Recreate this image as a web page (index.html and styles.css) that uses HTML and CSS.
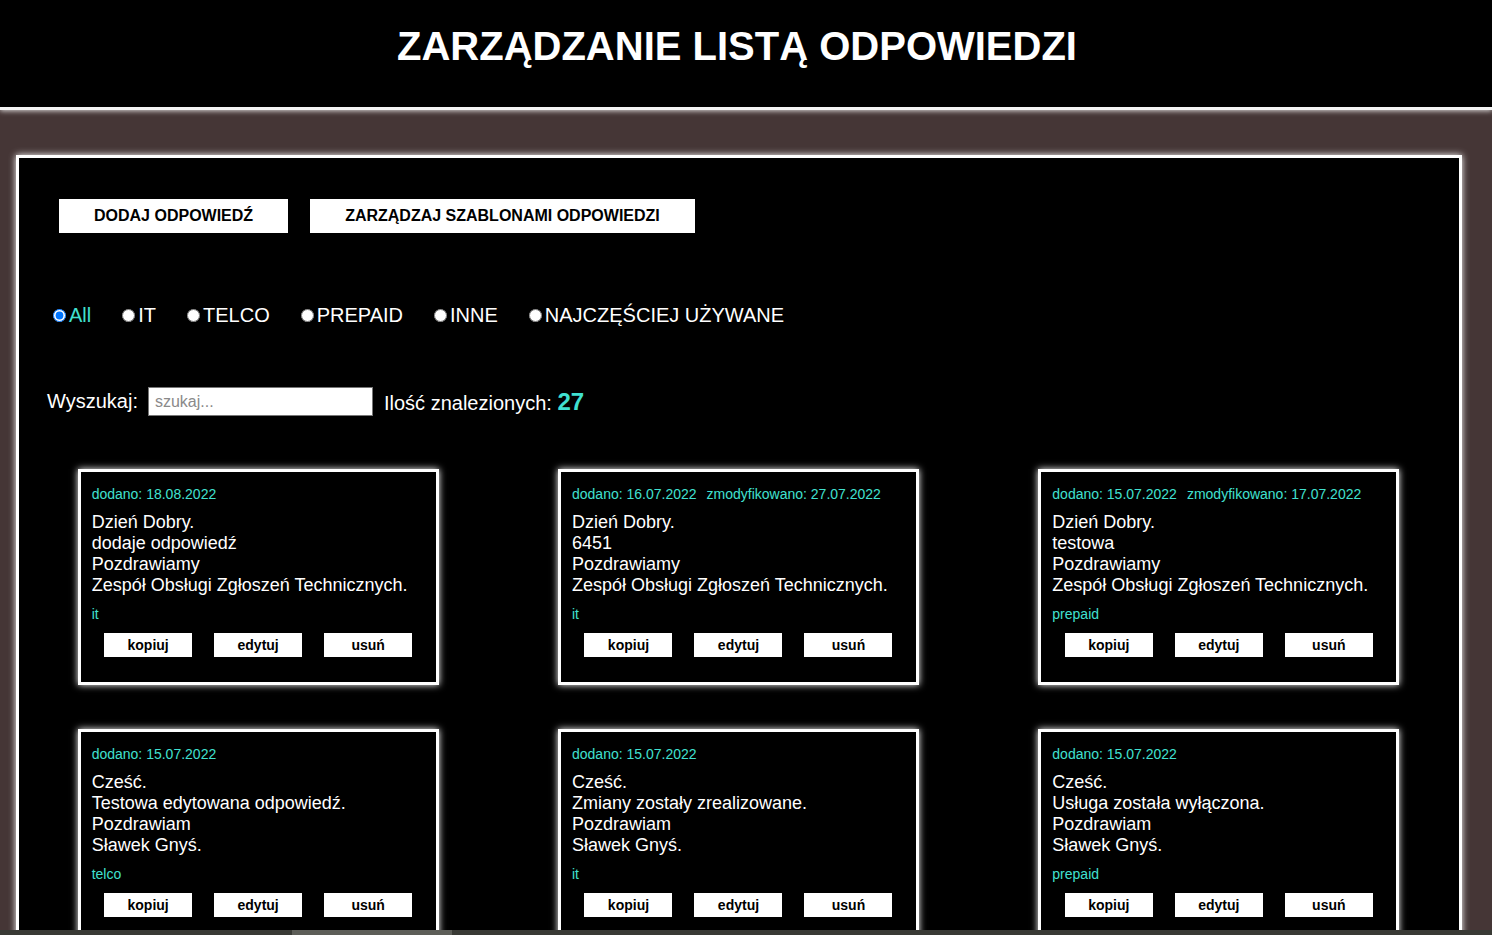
FILE: index.html
```html
<!DOCTYPE html>
<html lang="pl">
<head>
<meta charset="utf-8">
<title>Zarządzanie listą odpowiedzi</title>
<link rel="stylesheet" href="styles.css">
</head>
<body>
<header class="top">
  <h1 class="title">ZARZĄDZANIE LISTĄ ODPOWIEDZI</h1>
</header>
<main class="panel">
  <div class="actions">
    <button class="big-btn">DODAJ ODPOWIEDŹ</button>
    <button class="big-btn">ZARZĄDZAJ SZABLONAMI ODPOWIEDZI</button>
  </div>
  <div class="filters">
    <label class="filter active"><input type="radio" name="cat" checked>All</label>
    <label class="filter"><input type="radio" name="cat">IT</label>
    <label class="filter"><input type="radio" name="cat">TELCO</label>
    <label class="filter"><input type="radio" name="cat">PREPAID</label>
    <label class="filter"><input type="radio" name="cat">INNE</label>
    <label class="filter"><input type="radio" name="cat">NAJCZĘŚCIEJ UŻYWANE</label>
  </div>
  <div class="search">
    <span class="search-label">Wyszukaj:</span>
    <input class="search-input" type="text" placeholder="szukaj...">
    <span class="count-label">Ilość znalezionych: <b class="count">27</b></span>
  </div>
  <div class="cards">
    <div class="card">
      <div class="dates"><span class="date">dodano: 18.08.2022</span></div>
      <div class="body">Dzień Dobry.<br>dodaje odpowiedź<br>Pozdrawiamy<br>Zespół Obsługi Zgłoszeń Technicznych.</div>
      <div class="tag">it</div>
      <div class="card-btns"><button class="small-btn">kopiuj</button><button class="small-btn">edytuj</button><button class="small-btn">usuń</button></div>
    </div>
    <div class="card">
      <div class="dates"><span class="date">dodano: 16.07.2022</span><span class="date">zmodyfikowano: 27.07.2022</span></div>
      <div class="body">Dzień Dobry.<br>6451<br>Pozdrawiamy<br>Zespół Obsługi Zgłoszeń Technicznych.</div>
      <div class="tag">it</div>
      <div class="card-btns"><button class="small-btn">kopiuj</button><button class="small-btn">edytuj</button><button class="small-btn">usuń</button></div>
    </div>
    <div class="card">
      <div class="dates"><span class="date">dodano: 15.07.2022</span><span class="date">zmodyfikowano: 17.07.2022</span></div>
      <div class="body">Dzień Dobry.<br>testowa<br>Pozdrawiamy<br>Zespół Obsługi Zgłoszeń Technicznych.</div>
      <div class="tag">prepaid</div>
      <div class="card-btns"><button class="small-btn">kopiuj</button><button class="small-btn">edytuj</button><button class="small-btn">usuń</button></div>
    </div>
    <div class="card">
      <div class="dates"><span class="date">dodano: 15.07.2022</span></div>
      <div class="body">Cześć.<br>Testowa edytowana odpowiedź.<br>Pozdrawiam<br>Sławek Gnyś.</div>
      <div class="tag">telco</div>
      <div class="card-btns"><button class="small-btn">kopiuj</button><button class="small-btn">edytuj</button><button class="small-btn">usuń</button></div>
    </div>
    <div class="card">
      <div class="dates"><span class="date">dodano: 15.07.2022</span></div>
      <div class="body">Cześć.<br>Zmiany zostały zrealizowane.<br>Pozdrawiam<br>Sławek Gnyś.</div>
      <div class="tag">it</div>
      <div class="card-btns"><button class="small-btn">kopiuj</button><button class="small-btn">edytuj</button><button class="small-btn">usuń</button></div>
    </div>
    <div class="card">
      <div class="dates"><span class="date">dodano: 15.07.2022</span></div>
      <div class="body">Cześć.<br>Usługa została wyłączona.<br>Pozdrawiam<br>Sławek Gnyś.</div>
      <div class="tag">prepaid</div>
      <div class="card-btns"><button class="small-btn">kopiuj</button><button class="small-btn">edytuj</button><button class="small-btn">usuń</button></div>
    </div>
  </div>
</main>
<div class="hscroll"><div class="hscroll-thumb"></div></div>
</body>
</html>
```
FILE: styles.css
```css
html, body {
  margin: 0;
  padding: 0;
}
body {
  background: #453636;
  font-family: "Liberation Sans", Arial, sans-serif;
  color: #fff;
  overflow: hidden;
  height: 935px;
}
.top {
  background: #000;
  height: 107px;
  border-bottom: 3px solid #f4f4f4;
  box-shadow: 0 1px 5px rgba(255,255,255,0.8);
  display: flex;
  justify-content: center;
  align-items: flex-start;
}
.title {
  margin: 23px 0 0 -18px;
  font-size: 40px;
  font-weight: bold;
  line-height: 46px;
  color: #fff;
}
.panel {
  margin: 45px 0 0 16px;
  width: 1440px;
  background: #000;
  border: 3px solid #fff;
  box-shadow: 0 0 7px #fff;
  padding: 41px 0 60px 0;
}
.actions {
  display: flex;
  gap: 22px;
  padding-left: 40px;
}
.big-btn {
  background: #fff;
  border: none;
  height: 34px;
  padding: 0 35px;
  font-family: "Liberation Sans", Arial, sans-serif;
  font-weight: bold;
  font-size: 16px;
  color: #000;
}
.filters {
  display: flex;
  align-items: center;
  margin-top: 71px;
  padding-left: 29px;
  gap: 26px;
  font-size: 20px;
  line-height: 23px;
}
.filter {
  display: flex;
  align-items: center;
  color: #fff;
}
.filter input {
  margin: 0 3px 0 5px;
  width: 13px;
  height: 13px;
}
.filter.active {
  color: #40e0d0;
}
.search {
  display: flex;
  align-items: center;
  margin-top: 60px;
  padding-left: 28px;
  font-size: 20px;
}
.search-label {
  margin-right: 10px;
}
.search-input {
  width: 225px;
  height: 29px;
  box-sizing: border-box;
  border: 1px solid #767676;
  padding: 0 6px;
  font-family: "Liberation Sans", Arial, sans-serif;
  font-size: 16px;
  margin-right: 11px;
}
.search-input::placeholder {
  color: #8a8a8a;
}
.count {
  color: #40e0d0;
  font-size: 24px;
}
.cards {
  display: grid;
  grid-template-columns: repeat(3, 1fr);
  row-gap: 44px;
  margin: 53px 0 0 -1px;
}
.card {
  justify-self: center;
  width: 355px;
  height: 210px;
  box-sizing: content-box;
  border: 3px solid #fff;
  box-shadow: 0 0 7px #fff;
  background: #000;
  padding: 0;
  display: flex;
  flex-direction: column;
}
.dates {
  margin: 14px 0 0 11px;
  font-size: 14px;
  line-height: 16px;
  color: #40e0d0;
  display: flex;
  gap: 10px;
}
.body {
  margin: 10px 0 0 11px;
  font-size: 18px;
  line-height: 21px;
  color: #fff;
}
.tag {
  margin: 10px 0 0 11px;
  font-size: 14px;
  line-height: 16px;
  color: #40e0d0;
}
.card-btns {
  display: flex;
  justify-content: center;
  gap: 22px;
  margin-top: 11px;
}
.small-btn {
  width: 88px;
  height: 24px;
  background: #fff;
  border: none;
  padding: 0;
  font-family: "Liberation Sans", Arial, sans-serif;
  font-weight: bold;
  font-size: 14px;
  color: #000;
}
.hscroll {
  position: fixed;
  left: 0;
  bottom: 0;
  width: 100%;
  height: 5px;
  background: #393a35;
}
.hscroll-thumb {
  margin-left: 292px;
  width: 160px;
  height: 5px;
  background: #5d5e58;
}
```
